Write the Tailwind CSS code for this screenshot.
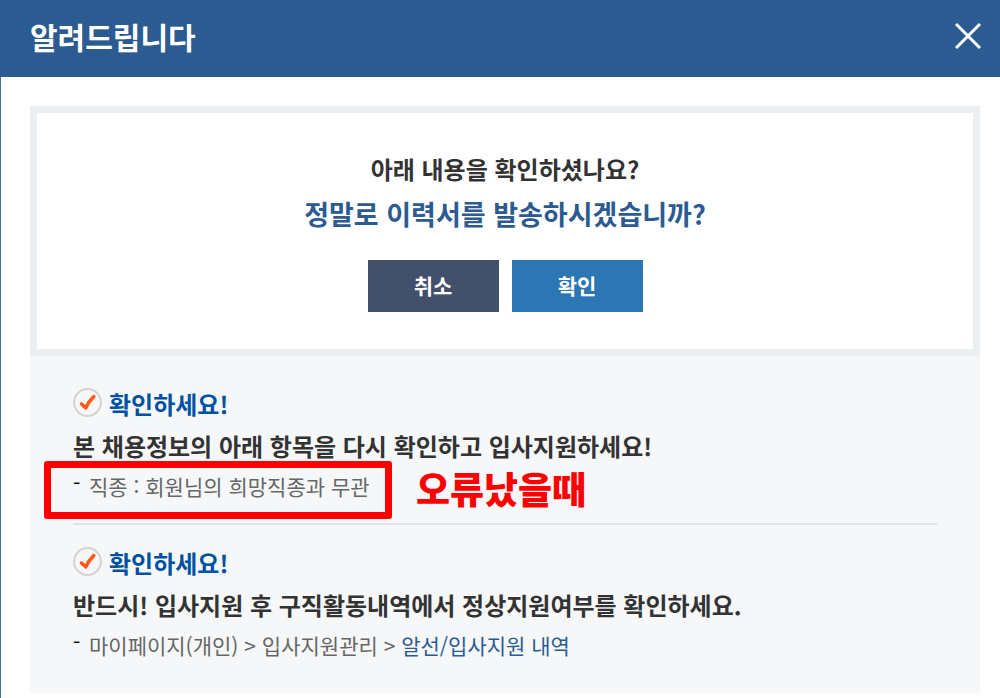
<!DOCTYPE html>
<html lang="ko">
<head>
    <meta charset="UTF-8">
    <meta name="viewport" content="width=device-width, initial-scale=1.0">
    <title>알려드립니다</title>
    <script src="https://cdn.jsdelivr.net/npm/@tailwindcss/browser@4"></script>
</head>
<body class="bg-white font-['Noto_Sans_CJK_KR',sans-serif] text-[#333]">
    <div class="min-h-screen flex flex-col">
        <!-- Header -->
        <header class="bg-[#2c5b91] h-[77px] pl-[30px] pr-[19px] pb-[6px] flex items-center justify-between">
            <h1 class="text-[30px] leading-[40px] font-bold text-white">알려드립니다</h1>
            <button type="button" aria-label="닫기">
                <svg class="w-[26px] h-[26px]" viewBox="0 0 26 26" fill="none" stroke="#fff" stroke-width="3">
                    <path d="M1 1L25 25M25 1L1 25"/>
                </svg>
            </button>
        </header>

        <main class="flex-1 border-l border-[#4373ab] pt-[29px] pb-[5px] pl-[29px] pr-5">
            <!-- Confirm -->
            <section class="border-[7px] border-[#ebeff2] bg-white pt-[38px] pb-[37px] text-center">
                <p class="text-[24px] leading-[36px] font-bold">아래 내용을 확인하셨나요?</p>
                <p class="mt-[9px] text-[27px] leading-[36px] font-bold text-[#2c5b91]">정말로 이력서를 발송하시겠습니까?</p>
                <div class="mt-7 flex justify-center gap-[13px] text-[21px] font-bold text-white">
                    <button type="button" class="w-[131px] h-[52px] bg-[#43506c]">취소</button>
                    <button type="button" class="w-[131px] h-[52px] bg-[#2c76b4]">확인</button>
                </div>
            </section>

            <!-- Notices -->
            <div class="bg-[#f5f7f9] px-[43px] pt-[30px] pb-[30px]">
                <section class="border-b-2 border-[#e0e2e4] pb-[19px]">
                    <h2 class="flex gap-[7px] text-[24px] leading-[36px] font-bold text-[#0051a1]">
                        <svg class="w-[29px] h-[29px] mt-[2px]" viewBox="0 0 29 29" fill="none">
                            <circle cx="14.5" cy="14.5" r="13.4" fill="#f7f7f8" stroke="#d2d3d4" stroke-width="2"/>
                            <path d="M8.5 16L12.8 19.8C14.8 15.5 17.2 11.9 20.8 8.6" stroke="#ff5a1c" stroke-width="3.6" stroke-linecap="round" stroke-linejoin="round"/>
                        </svg>
                        확인하세요!
                    </h2>
                    <p class="mt-[5px] text-[24px] leading-[38px] font-bold">본 채용정보의 아래 항목을 다시 확인하고 입사지원하세요!</p>
                    <ul class="relative mt-[3px] text-[21px] leading-[36px] text-[#666]">
                        <li class="flex gap-[10px]">
                            <span class="w-[6px] leading-[28px] text-black">-</span>
                            <span>직종 : 회원님의 희망직종과 무관</span>
                        </li>
                        <!-- Marker and label drawn over the item -->
                        <li class="absolute -left-[29px] -top-[7px] flex items-center gap-6 whitespace-nowrap">
                            <span class="w-[348px] h-[58px] rounded-[3px] border-[7px] border-[#f00]"></span>
                            <strong class="pb-1 text-[37px] leading-[40px] font-black text-[#f00]">오류났을때</strong>
                        </li>
                    </ul>
                </section>

                <section class="pt-5">
                    <h2 class="flex gap-[7px] text-[24px] leading-[36px] font-bold text-[#0051a1]">
                        <svg class="w-[29px] h-[29px] mt-[2px]" viewBox="0 0 29 29" fill="none">
                            <circle cx="14.5" cy="14.5" r="13.4" fill="#f7f7f8" stroke="#d2d3d4" stroke-width="2"/>
                            <path d="M8.5 16L12.8 19.8C14.8 15.5 17.2 11.9 20.8 8.6" stroke="#ff5a1c" stroke-width="3.6" stroke-linecap="round" stroke-linejoin="round"/>
                        </svg>
                        확인하세요!
                    </h2>
                    <p class="mt-[5px] text-[24px] leading-[38px] font-bold">반드시! 입사지원 후 구직활동내역에서 정상지원여부를 확인하세요.</p>
                    <ul class="mt-[3px] text-[21px] leading-[36px] text-[#666]">
                        <li class="flex gap-[10px]">
                            <span class="w-[6px] leading-[28px] text-black">-</span>
                            <span>마이페이지(개인) &gt; 입사지원관리 &gt; <a href="#" class="text-[#2c5b91]">알선/입사지원 내역</a></span>
                        </li>
                    </ul>
                </section>
            </div>
        </main>
    </div>
</body>
</html>
